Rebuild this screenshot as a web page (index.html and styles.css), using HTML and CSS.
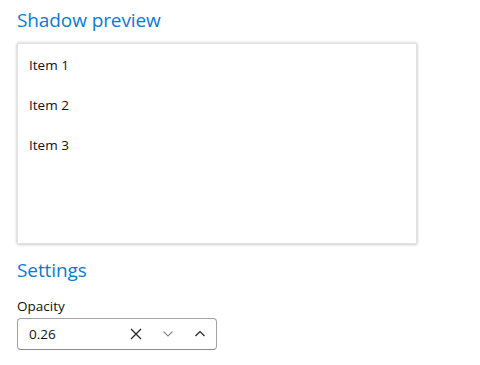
FILE: index.html
```html
<!DOCTYPE html>
<html>
<head>
<meta charset="utf-8">
<link rel="stylesheet" href="styles.css">
</head>
<body>
<div class="page">
  <h2 class="title">Shadow preview</h2>
  <div class="card">
    <div class="item">Item 1</div>
    <div class="item">Item 2</div>
    <div class="item">Item 3</div>
  </div>
  <h2 class="title settings">Settings</h2>
  <div class="label">Opacity</div>
  <div class="numbox">
    <span class="value">0.26</span>
    <span class="btn clear">
      <svg width="12" height="12" viewBox="0 0 12 12"><path d="M1 1 L11 11 M11 1 L1 11" stroke="#1a1a1a" stroke-width="1.1" fill="none"/></svg>
    </span>
    <span class="btn down">
      <svg width="12" height="8" viewBox="0 0 12 8"><path d="M1.5 1.5 L6 6 L10.5 1.5" stroke="#8a8a8a" stroke-width="1.1" fill="none"/></svg>
    </span>
    <span class="btn up">
      <svg width="12" height="8" viewBox="0 0 12 8"><path d="M1.5 6 L6 1.5 L10.5 6" stroke="#1a1a1a" stroke-width="1.1" fill="none"/></svg>
    </span>
  </div>
</div>
</body>
</html>
```

FILE: styles.css
```css
html, body {
  margin: 0;
  padding: 0;
  background: #ffffff;
}
body {
  font-family: "Open Sans", "Noto Sans", "Liberation Sans", sans-serif;
  color: #111111;
}
.page {
  padding: 6px 0 0 17px;
  width: 400px;
}
.title {
  margin: 0;
  font-size: 19px;
  font-weight: 400;
  line-height: 28px;
  color: #0a7ad6;
  letter-spacing: -0.1px;
}
.card {
  margin-top: 9px;
  height: 198px;
  border: 1px solid #e2e2e2;
  box-shadow: 0 0 3px rgba(0,0,0,0.2), 0 1px 3px rgba(0,0,0,0.1);
  padding-top: 1px;
  background: #fff;
  box-sizing: content-box;
  width: 398px;
}
.item {
  height: 40px;
  line-height: 40px;
  padding-left: 11px;
  font-size: 13.5px;
}
.settings {
  margin-top: 12px;
}
.label {
  margin-top: 12px;
  font-size: 13.5px;
  line-height: 20px;
}
.numbox {
  margin-top: 2px;
  width: 200px;
  height: 32px;
  box-sizing: border-box;
  border: 1px solid #a2a2a2;
  border-bottom-color: #888888;
  border-radius: 4px;
  display: flex;
  align-items: center;
  padding-left: 11px;
  font-size: 13.5px;
}
.value {
  flex: 1;
}
.btn {
  width: 32px;
  height: 30px;
  display: flex;
  align-items: center;
  justify-content: center;
}
```
